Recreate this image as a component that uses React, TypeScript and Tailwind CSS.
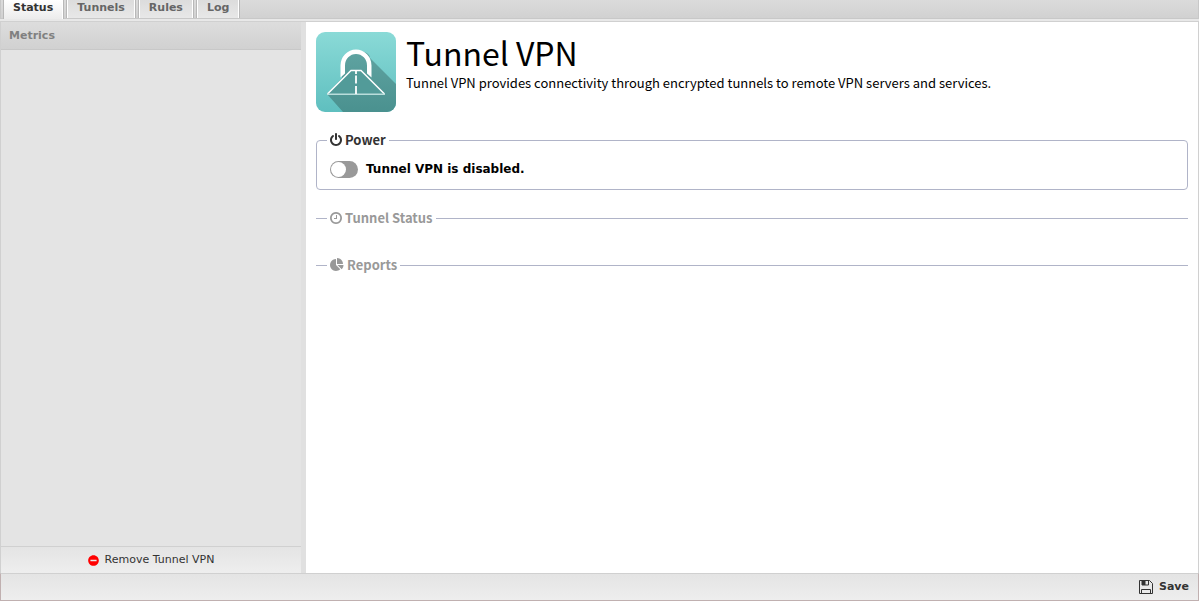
import { ReactNode, useState } from "react";
import { FaMinusCircle } from "react-icons/fa";

const TABS = ["Status", "Tunnels", "Rules", "Log"];

function AppIcon() {
  return (
    <svg className="h-20 w-20 shrink-0" viewBox="0 0 80 80" aria-hidden="true">
      <defs>
        <linearGradient id="tile" x1="0" y1="0" x2="0" y2="1">
          <stop offset="0" stopColor="#8adad7" />
          <stop offset="1" stopColor="#5fbfbf" />
        </linearGradient>
        <linearGradient id="shade" x1="0" y1="0" x2="0" y2="1">
          <stop offset="0" stopColor="#5fa3a1" />
          <stop offset="1" stopColor="#4a918f" />
        </linearGradient>
        <clipPath id="round">
          <rect width="80" height="80" rx="9" />
        </clipPath>
      </defs>
      <g clipPath="url(#round)">
        <rect width="80" height="80" fill="url(#tile)" />
        <path d="M26 46V33c0-17 28-17 28-7l26 26v28H27L11 62z" fill="url(#shade)" />
        <path d="M24.500 45.500V33.500a15.500 16 0 0 1 31 0v12l-4.500-4v-8a11 11.500 0 0 0-22 0v8z" fill="#fff" />
        <path d="M35 38h11L69 62.500H11z" fill="#529b99" />
        <path d="M11.500 62L35 38.500h10L68.500 62" fill="none" stroke="#fff" strokeWidth="1.500" />
        <path d="M11 62.200h58" stroke="#b9dddb" strokeWidth="1.600" />
        <path d="M40 39v3M40 43.500v8M40 54v8" stroke="#fff" strokeWidth="1.800" />
      </g>
    </svg>
  );
}

function PowerIcon() {
  return (
    <svg className="h-3.5 w-3" viewBox="128 0 1536 1792" fill="currentColor" aria-hidden="true">
      <path d="M1664 896q0 156-61 298t-164 245-245 164-298 61-298-61-245-164-164-245-61-298q0-182 80.5-343t226.5-270q43-32 95.5-25t83.5 50q32 42 24.5 94.5t-49.5 84.5q-98 74-151.5 181t-53.5 228q0 104 40.5 198.5t109.5 163.5 163.5 109.5 198.5 40.5 198.5-40.5 163.5-109.5 109.5-163.5 40.5-198.5q0-121-53.5-228t-151.5-181q-42-32-49.5-84.5t24.5-94.5q31-43 84-50t95 25q146 109 226.5 270t80.5 343zm-640-768v640q0 52-38 90t-90 38-90-38-38-90v-640q0-52 38-90t90-38 90 38 38 90z" />
    </svg>
  );
}

function ClockIcon() {
  return (
    <svg className="h-3.5 w-3" viewBox="128 0 1536 1792" fill="currentColor" aria-hidden="true">
      <path d="M1024 544v448q0 14-9 23t-23 9h-320q-14 0-23-9t-9-23v-64q0-14 9-23t23-9h224v-352q0-14 9-23t23-9h64q14 0 23 9t9 23zm416 352q0-148-73-273t-198-198-273-73-273 73-198 198-73 273 73 273 198 198 273 73 273-73 198-198 73-273zm224 0q0 209-103 385.5t-279.5 279.5-385.5 103-385.5-103-279.5-279.5-103-385.5 103-385.5 279.5-279.5 385.5-103 385.5 103 279.5 279.5 103 385.5z" />
    </svg>
  );
}

function PieIcon() {
  return (
    <svg className="h-3.5 w-3.5" viewBox="0 0 1792 1792" fill="currentColor" aria-hidden="true">
      <path d="M768 890l546 546q-106 108-247.5 168t-298.500 60q-209 0-385.500-103t-279.500-279.500-103-385.500 103-385.500 279.500-279.500 385.500-103v762zm187 6h773q0 157-60 298.500t-168 247.500zm709-128h-768v-768q209 0 385.500 103t279.500 279.500 103 385.500z" />
    </svg>
  );
}

function SaveIcon() {
  return (
    <svg className="h-3.5 w-3.5" viewBox="0 0 14 14" fill="none" stroke="#333" aria-hidden="true">
      <path d="M.5.5h10l3 3v10H.5z" />
      <path d="M3 .5v4.500h6.500v-4.500M2.500 13.500v-4h9v4" />
      <path d="M3 1h3.500v4H3z" fill="#333" stroke="none" />
    </svg>
  );
}

interface SectionProps {
  icon: ReactNode;
  title: string;
  disabled?: boolean;
  children?: ReactNode;
}

function Section({ icon, title, disabled, children }: SectionProps) {
  return (
    <fieldset className={disabled ? "h-[29px] border-t border-[#b0b4c8] pl-2.5" : "rounded-[4px] border border-[#b0b4c8] px-2.5 pb-2.5"}>
      <legend className={`px-[3px] font-['Noto_Sans_CJK_SC',sans-serif] text-[13px] leading-5 font-bold ${disabled ? "ml-px text-[#999]" : "text-[#333]"}`}>
        <span className="flex items-center gap-[3px]">
          {icon}
          {title}
        </span>
      </legend>
      {children}
    </fieldset>
  );
}

export default function App() {
  const [tab, setTab] = useState("Status");
  const [enabled, setEnabled] = useState(false);

  return (
    <div className="flex min-h-screen flex-col bg-[#e8e8e8] font-['DejaVu_Sans',sans-serif] text-[11px] text-[#333]">
      <nav className="flex h-[19px] gap-[2px] border-x border-b border-[#c8c8c8] bg-linear-to-b from-[#dbdbdb] to-[#d1d1d1] pl-[2px]">
        {TABS.map((name) => (
          <button
            key={name}
            onClick={() => setTab(name)}
            className={`border-x border-l-[#b8b8b8] border-r-[#b8b8b8] px-2.5 leading-4 font-bold first:pl-[9px] ${
              tab === name
                ? "-mb-px bg-linear-to-b from-white to-[#ececec] pb-1 text-[#333] shadow-[inset_-1px_0_#fff]"
                : "bg-linear-to-b from-[#dcdcdc] to-[#e8e8e8] pb-0.5 text-[#666] shadow-[inset_1px_0_#fff,inset_-1px_0_#fff]"
            }`}
          >
            {name}
          </button>
        ))}
      </nav>

      <div className="mt-0.5 flex grow border-x border-t border-[#d0d0d0]">
        <aside className="flex w-[300px] shrink-0 flex-col bg-[#e4e4e4]">
          <h2 className="h-7 border-b border-[#c8c8c8] bg-linear-to-b from-[#dddddd] to-[#d1d1d1] px-2 leading-7 font-bold text-[#808080]">Metrics</h2>
          <button className="mt-auto flex h-[27px] items-center justify-center gap-1.5 border-t border-[#d0d0d0] bg-linear-to-b from-[#e4e4e4] to-[#eeeeee]">
            <FaMinusCircle className="size-[11px] text-[#f00]" />
            Remove Tunnel VPN
          </button>
        </aside>
        <div className="w-[5px] shrink-0 bg-[#e0e0e0]" />

        <main className="grow bg-white p-2.5">
          <header className="flex gap-2.5 font-['Noto_Sans_CJK_SC',sans-serif] text-black">
            <AppIcon />
            <div>
              <h1 className="text-[32px] leading-[41px]">Tunnel VPN</h1>
              <p className="text-[13px] leading-5">Tunnel VPN provides connectivity through encrypted tunnels to remote VPN servers and services.</p>
            </div>
          </header>

          <div className="mt-[18px] flex flex-col gap-[18px]">
            <Section icon={<PowerIcon />} title="Power">
              <label className="mt-[9px] flex items-center gap-2 pl-[3px] text-[12px] leading-5 font-bold text-black">
                <input
                  type="checkbox"
                  role="switch"
                  checked={enabled}
                  onChange={(e) => setEnabled(e.target.checked)}
                  className="h-[17px] w-7 appearance-none rounded-full bg-[#999] p-px before:block before:size-[15px] before:rounded-full before:bg-white checked:bg-[#68bd49] checked:before:ml-auto"
                />
                Tunnel VPN is {enabled ? "enabled" : "disabled"}.
              </label>
            </Section>
            <Section icon={<ClockIcon />} title="Tunnel Status" disabled />
            <Section icon={<PieIcon />} title="Reports" disabled />
          </div>
        </main>
      </div>

      <footer className="flex h-7 items-center justify-end border border-t-[#d0d0d0] border-[#c0b0b0] bg-linear-to-b from-[#e4e4e4] to-[#eeeeee] px-[9px]">
        <button className="flex items-center gap-1.5 font-bold">
          <SaveIcon />
          Save
        </button>
      </footer>
    </div>
  );
}
